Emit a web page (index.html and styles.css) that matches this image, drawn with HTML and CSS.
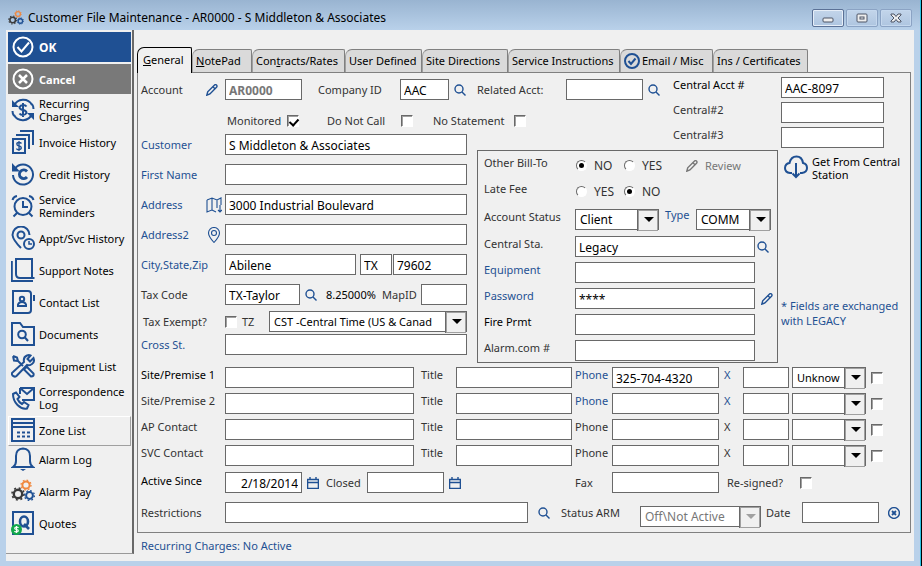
FILE: index.html
```html
<!DOCTYPE html>
<html lang="en">
<head>
  <meta charset="UTF-8" />
  <meta name="viewport" content="width=device-width, initial-scale=1.0"/>
  <title>Customer File Maintenance</title>
  <link rel="stylesheet" href="styles.css">
</head>
<body>
  <svg class="sprite" aria-hidden="true">
    <symbol id="search" viewBox="0 0 12 12"><circle cx="5" cy="5" r="4"/><path d="M8 8l3.500 3.500"/></symbol>
    <symbol id="pencil" viewBox="0 0 12 12"><path d="M.8 11.200l.9-3.400L8.300 1.200q1.200-1.100 2.200-.1t0 2.200L3.900 9.900z"/><path d="M7 2.700l2.200 2.200"/></symbol>
    <symbol id="calendar" viewBox="0 0 12 12"><path d="M.6 2.500h10.800v9H.6zM.6 5.500h10.800M3 0v3M9 0v3"/></symbol>
    <symbol id="gears" viewBox="0 0 24 24">
      <g stroke="#f0883e"><circle cx="15" cy="6" r="3.600"/><circle cx="15" cy="6" r="5" stroke-width="1.300" stroke-dasharray="1.700 2.227"/></g>
      <g stroke="#3a3a3a"><circle cx="7" cy="15" r="4.200" stroke-width="2.400"/><circle cx="7" cy="15" r="6" stroke-width="1.600" stroke-dasharray="2 2.712"/></g>
      <g stroke="#1f5093"><circle cx="18.500" cy="16.500" r="3.400"/><circle cx="18.500" cy="16.500" r="4.900" stroke-width="1.300" stroke-dasharray="1.700 2.148"/></g>
    </symbol>
  </svg>

  <div class="window">
    <header class="titlebar">
      <svg class="title-icon"><use href="#gears"/></svg>
      <h1>Customer File Maintenance - AR0000 - S Middleton &amp; Associates</h1>
      <div class="win-btns">
        <button class="strong" aria-label="Minimize"><svg viewBox="0 0 20 16"><rect x="5" y="8" width="10" height="4" rx="1"/></svg></button>
        <button aria-label="Restore"><svg viewBox="0 0 20 16"><rect x="5" y="4" width="10" height="8" rx="1"/><rect x="8" y="7" width="4" height="2"/></svg></button>
        <button aria-label="Close"><svg viewBox="0 0 20 16"><path d="M5 4h3l2 2.500L12 4h3v1l-3 3 3 3v1h-3l-2-2.500L8 12H5v-1l3-3-3-3z"/></svg></button>
      </div>
    </header>

    <div class="client">
      <aside class="sidebar">
        <nav class="menu">
          <button class="menu-btn ok">
            <svg viewBox="0 0 24 24"><circle cx="12" cy="12" r="9.500"/><path d="M6.500 12l4 4.500 7.500-9"/></svg>
            <span>OK</span>
          </button>
          <button class="menu-btn cancel">
            <svg viewBox="0 0 24 24"><circle cx="12" cy="12" r="9.500"/><path d="M8 8l8 8M16 8l-8 8" stroke-width="2.500"/></svg>
            <span>Cancel</span>
          </button>
          <button class="menu-btn">
            <svg viewBox="0 0 24 24"><path d="M3 8a10 10 0 0118-1M21 16a10 10 0 01-18 1M1.500 13q0 3 1.500 5M22.500 11q0-3-1.500-5"/><path d="M1 2v7h7zM23 22v-7h-7z" fill="#1f5093" stroke="none"/><path d="M15.500 8.500q-1-1.500-3.500-1.500t-3.500 2.200q0 2 3.500 2.800t3.500 2.800q-1 2.200-3.500 2.200t-3.500-1.500M12 5v14"/></svg>
            <span>Recurring<br>Charges</span>
          </button>
          <button class="menu-btn">
            <svg viewBox="0 0 24 24"><path d="M2 9h12v14H2zM5 5h13v14M9 1h13v14"/><path d="M10.500 13.500q-.8-1-2.500-1-2.200 0-2.200 1.600T8 16t2.300 1.800T8 19.500t-2.500-1M8 11v10" stroke-width="1.300"/></svg>
            <span>Invoice History</span>
          </button>
          <button class="menu-btn">
            <svg viewBox="0 0 24 24"><path d="M4 6.500a10 10 0 11-2 6.500"/><path d="M1 1v8.500h8z" fill="#1f5093" stroke="none"/><path d="M16 9.500a4.300 4.300 0 100 5.500" stroke-width="2.800"/></svg>
            <span>Credit History</span>
          </button>
          <button class="menu-btn">
            <svg viewBox="0 0 24 24"><circle cx="12" cy="12.500" r="8.500"/><path d="M12 7v6h5M6 19l-3.500 3.500M18 19l3.500 3.500M1.500 6Q2.500 2.500 6 2M22.500 6Q21.500 2.500 18 2"/></svg>
            <span>Service<br>Reminders</span>
          </button>
          <button class="menu-btn">
            <svg viewBox="0 0 24 24"><path d="M10 22Q2 14 1.500 9a8.500 8.500 0 0117 0"/><circle cx="10" cy="9" r="3.500"/><circle cx="18" cy="18" r="5"/><path d="M18 15v3h3" stroke-width="1.500"/></svg>
            <span>Appt/Svc History</span>
          </button>
          <button class="menu-btn">
            <svg viewBox="0 0 24 24"><path d="M5 1h16v19H9q-4 0-4-4zM21 20h2.500M.8 3v20H22"/></svg>
            <span>Support Notes</span>
          </button>
          <button class="menu-btn">
            <svg viewBox="0 0 24 24"><path d="M2 1h15q3 0 3 3v16q0 3-3 3H2zM23 5v6"/><circle cx="11" cy="9" r="2.200"/><path d="M7 16v-1.500q1-2.500 4-2.500t4 2.500V16z"/></svg>
            <span>Contact List</span>
          </button>
          <button class="menu-btn">
            <svg viewBox="0 0 24 24"><path d="M1 1h8l3 4h11v18H1z"/><circle cx="11" cy="12.500" r="3.800"/><path d="M13.500 15l3.500 4"/></svg>
            <span>Documents</span>
          </button>
          <button class="menu-btn">
            <svg viewBox="0 0 24 24"><path d="M2 2l4 1.500L7 7l5 5M2 2l1 4.500L7 7M14 14l2-1 6.500 6.500q.8 3-2.500 3L13.500 16zM2 18L13 8q-1-5 3-6.500 2-.8 3.500 0L16.500 5l2.500 2.500L22.500 4q1.500 4-1.500 6t-5 1L5.500 22q-2 1.500-4-.5 -1.500-2 .5-3.500z"/></svg>
            <span>Equipment List</span>
          </button>
          <button class="menu-btn">
            <svg viewBox="0 0 24 24"><path d="M9 2h14v12H11M9 2l7 6 7-6M9 2v6"/><path d="M2 8l3-1.500L8.500 11l-2 2q1.500 3.500 4.500 5l2-2 4.500 3-1.500 3.500q-5 1-9.500-3.500T2 8z"/></svg>
            <span>Correspondence<br>Log</span>
          </button>
          <button class="menu-btn raised">
            <svg viewBox="0 0 24 24"><path d="M1 1h22v22H1zM1 5h22M1 9h22"/><path d="M6 14.500h13M6 18.500h13" stroke-dasharray="3 2"/></svg>
            <span>Zone List</span>
          </button>
        </nav>
        <nav class="menu menu-foot">
          <button class="menu-btn">
            <svg viewBox="0 0 24 24"><path d="M2 20q3-2 3-6V9q0-7 7-7.500Q19 2 19 9v5q0 4 3 6z"/><path d="M9 22h6l-3 2z" fill="#1f5093" stroke="none"/></svg>
            <span>Alarm Log</span>
          </button>
          <button class="menu-btn">
            <svg><use href="#gears"/></svg>
            <span>Alarm Pay</span>
          </button>
          <button class="menu-btn">
            <svg viewBox="0 0 24 24"><path d="M2 1h20v22H2z"/><ellipse cx="13" cy="10.500" rx="4" ry="5" stroke-width="2.600"/><path d="M13 13l5 5" stroke-width="2.600"/><circle cx="5.500" cy="18.500" r="5.500" fill="#12a84a" stroke="none"/><path d="M7.500 16.800q-.6-.8-2-.8-1.800 0-1.800 1.200t1.800 1.300 1.800 1.300-1.800 1.200-2-.8M5.500 15v7" stroke="#fff" stroke-width="1.200"/></svg>
            <span>Quotes</span>
          </button>
        </nav>
      </aside>

      <main class="main-content">
        <div class="tabs" role="tablist">
          <button class="tab active" role="tab"><span><u>G</u>eneral</span></button>
          <button class="tab t-note" role="tab"><span><u>N</u>otePad</span></button>
          <button class="tab t-rates" role="tab"><span>Con<u>t</u>racts/Rates</span></button>
          <button class="tab t-user" role="tab">User Defined</button>
          <button class="tab t-site" role="tab">Site Directions</button>
          <button class="tab t-service" role="tab">Service Instructions</button>
          <button class="tab t-email" role="tab"><svg viewBox="0 0 16 16"><circle cx="8" cy="8" r="7"/><path d="M4.500 8l2.500 3 4.500-5.500"/></svg>Email / Misc</button>
          <button class="tab t-ins" role="tab">Ins / Certificates</button>
        </div>

        <form class="panel">
          <div class="top-grid">
            <section class="account">
              <div class="row">
                <label class="lbl" for="account">Account</label>
                <button type="button" class="icon-btn edit-acct" aria-label="Edit account"><svg><use href="#pencil"/></svg></button>
                <input type="text" id="account" class="w-77 acct-no" value="AR0000">
                <label class="company-lbl" for="company">Company ID</label>
                <input type="text" id="company" class="w-49" value="AAC">
                <button type="button" class="icon-btn" aria-label="Find company"><svg><use href="#search"/></svg></button>
                <label class="related-lbl" for="related">Related Acct:</label>
                <input type="text" id="related" class="w-77">
                <button type="button" class="icon-btn" aria-label="Find related account"><svg><use href="#search"/></svg></button>
              </div>
              <div class="checks">
                <label class="c-mon">Monitored <input type="checkbox" checked></label>
                <label class="c-call">Do Not Call <input type="checkbox"></label>
                <label class="c-stmt">No Statement <input type="checkbox"></label>
              </div>
            </section>

            <section class="central">
              <label class="dark" for="c1">Central Acct #</label><input type="text" id="c1" value="AAC-8097">
              <label for="c2">Central#2</label><input type="text" id="c2">
              <label for="c3">Central#3</label><input type="text" id="c3">
            </section>

            <section class="customer">
              <div class="row"><label class="lbl blue" for="customer">Customer</label><input type="text" id="customer" class="grow" value="S Middleton &amp; Associates"></div>
              <div class="row"><label class="lbl blue" for="first">First Name</label><input type="text" id="first" class="grow"></div>
              <div class="row">
                <label class="lbl blue" for="address">Address</label>
                <button type="button" class="icon-btn map" aria-label="Open map"><svg viewBox="0 0 16 16"><path d="M1 3l5-2 5 2 4-2v7M1 3v12l5-2V1M6 13l4 2M11 3v8M14 8v7M12 13l2 2 2-2"/></svg></button>
                <input type="text" id="address" class="grow" value="3000 Industrial Boulevard">
              </div>
              <div class="row">
                <label class="lbl blue" for="address2">Address2</label>
                <button type="button" class="icon-btn map" aria-label="Locate"><svg viewBox="0 0 16 16"><path d="M8 15.500Q2.500 9.500 2.500 6a5.500 5.500 0 0111 0Q13.500 9.500 8 15.500z"/><circle cx="8" cy="6" r="2.500"/></svg></button>
                <input type="text" id="address2" class="grow">
              </div>
              <div class="row">
                <label class="lbl blue" for="city">City,State,Zip</label>
                <input type="text" id="city" class="grow" value="Abilene">
                <input type="text" class="w-32 state" aria-label="State" value="TX">
                <input type="text" class="w-74" aria-label="Zip" value="79602">
              </div>
              <div class="row">
                <label class="lbl" for="tax">Tax Code</label>
                <input type="text" id="tax" class="w-75" value="TX-Taylor">
                <button type="button" class="icon-btn" aria-label="Find tax code"><svg><use href="#search"/></svg></button>
                <span class="dark rate">8.25000%</span>
                <label class="mapid-lbl" for="mapid">MapID</label>
                <input type="text" id="mapid" class="grow">
              </div>
              <div class="row">
                <label class="lbl exempt" for="exempt">Tax Exempt?</label>
                <input type="checkbox" id="exempt">
                <label class="tz-lbl" for="tz">TZ</label>
                <span class="combo small grow"><select id="tz"><option>CST -Central Time (US &amp; Canad</option></select></span>
              </div>
              <div class="row"><label class="lbl blue" for="cross">Cross St.</label><input type="text" id="cross" class="grow"></div>
            </section>

            <section class="billing">
              <div class="row">
                <span class="bl">Other Bill-To</span>
                <label class="opt"><input type="radio" name="bill" checked>NO</label>
                <label class="opt"><input type="radio" name="bill">YES</label>
                <button type="button" class="review"><svg><use href="#pencil"/></svg>Review</button>
              </div>
              <div class="row">
                <span class="bl">Late Fee</span>
                <label class="opt"><input type="radio" name="late">YES</label>
                <label class="opt"><input type="radio" name="late" checked>NO</label>
              </div>
              <div class="row status">
                <label class="bl" for="status">Account Status</label>
                <span class="combo w-84"><select id="status"><option>Client</option></select></span>
                <label class="type-lbl blue" for="type">Type</label>
                <span class="combo w-75"><select id="type"><option>COMM</option></select></span>
              </div>
              <div class="row">
                <label class="bl" for="station">Central Sta.</label><input type="text" id="station" class="grow" value="Legacy">
                <button type="button" class="icon-btn side" aria-label="Find central station"><svg><use href="#search"/></svg></button>
              </div>
              <div class="row"><label class="bl blue" for="equip">Equipment</label><input type="text" id="equip" class="grow"><span class="side"></span></div>
              <div class="row">
                <label class="bl blue" for="pass">Password</label><input type="text" id="pass" class="grow" value="****">
                <button type="button" class="icon-btn side end" aria-label="Edit password"><svg><use href="#pencil"/></svg></button>
              </div>
              <div class="row"><label class="bl dark" for="fire">Fire Prmt</label><input type="text" id="fire" class="grow"><span class="side"></span></div>
              <div class="row"><label class="bl" for="alarm">Alarm.com #</label><input type="text" id="alarm" class="grow"><span class="side"></span></div>
            </section>

            <section class="station">
              <button type="button" class="get-btn">
                <svg viewBox="0 0 24 24"><path d="M8 18H6q-5-.5-5-5 .3-4.500 4.500-5Q7 1.500 12.500 1.500T19 8q4 .8 4 5t-5 5h-2M12 8v13M8.500 18.500L12 22l3.500-3.500"/></svg>
                <span>Get From Central Station</span>
              </button>
              <p class="blue">* Fields are exchanged with LEGACY</p>
            </section>
          </div>

          <div class="contacts">
            <label class="dark" for="s1">Site/Premise 1</label><input type="text" id="s1">
            <label class="ttl" for="s1t">Title</label><input type="text" id="s1t">
            <label class="blue" for="s1p">Phone</label><input type="text" id="s1p" value="325-704-4320">
            <label class="blue ext" for="s1x">X</label><input type="text" id="s1x">
            <span class="combo small"><select aria-label="Phone type 1"><option>Unknow</option></select></span><input type="checkbox" aria-label="Select 1">

            <label for="s2">Site/Premise 2</label><input type="text" id="s2">
            <label class="ttl" for="s2t">Title</label><input type="text" id="s2t">
            <label class="blue" for="s2p">Phone</label><input type="text" id="s2p">
            <label class="blue ext" for="s2x">X</label><input type="text" id="s2x">
            <span class="combo small"><select aria-label="Phone type 2"><option></option></select></span><input type="checkbox" aria-label="Select 2">

            <label for="ap">AP Contact</label><input type="text" id="ap">
            <label class="ttl" for="apt">Title</label><input type="text" id="apt">
            <label for="app">Phone</label><input type="text" id="app">
            <label class="ext" for="apx">X</label><input type="text" id="apx">
            <span class="combo small"><select aria-label="Phone type 3"><option></option></select></span><input type="checkbox" aria-label="Select 3">

            <label for="svc">SVC Contact</label><input type="text" id="svc">
            <label class="ttl" for="svct">Title</label><input type="text" id="svct">
            <label for="svcp">Phone</label><input type="text" id="svcp">
            <label class="ext" for="svcx">X</label><input type="text" id="svcx">
            <span class="combo small"><select aria-label="Phone type 4"><option></option></select></span><input type="checkbox" aria-label="Select 4">
          </div>

          <div class="row dates">
            <label class="lbl dark" for="since">Active Since</label>
            <input type="text" id="since" class="w-77 right" value="2/18/2014">
            <button type="button" class="icon-btn" aria-label="Pick start date"><svg><use href="#calendar"/></svg></button>
            <label class="closed-lbl" for="closed">Closed</label>
            <input type="text" id="closed" class="w-77">
            <button type="button" class="icon-btn" aria-label="Pick closed date"><svg><use href="#calendar"/></svg></button>
            <label class="fax-lbl" for="fax">Fax</label>
            <input type="text" id="fax" class="w-107">
            <label class="signed">Re-signed? <input type="checkbox"></label>
          </div>

          <div class="row last">
            <label class="lbl" for="restrict">Restrictions</label>
            <input type="text" id="restrict" class="grow">
            <button type="button" class="icon-btn wide" aria-label="Find restriction"><svg><use href="#search"/></svg></button>
            <label class="arm-lbl" for="arm">Status ARM</label>
            <span class="combo w-121 off"><select id="arm" disabled><option>Off\Not Active</option></select></span>
            <label class="date-lbl" for="date">Date</label>
            <input type="text" id="date" class="w-77">
            <button type="button" class="icon-btn clear" aria-label="Clear date"><svg viewBox="0 0 12 12"><circle cx="6" cy="6" r="5.400"/><path d="M4 4l4 4M8 4l-4 4" stroke-width="1.800"/></svg></button>
          </div>
        </form>

        <p class="status-line blue">Recurring Charges: No Active</p>
      </main>
    </div>
  </div>
</body>
</html>
```
FILE: styles.css
```css
* { margin: 0; padding: 0; box-sizing: border-box; }
body {
  font-family: "Noto Sans", "Open Sans", sans-serif;
  font-size: 11px;
  line-height: 16px;
  color: #333;
  background: #b9d1ea;
}
button, input, select { font: inherit; color: inherit; border-radius: 0; }
button { background: none; border: none; }
svg { fill: none; stroke: #1f5093; stroke-width: 2; flex-shrink: 0; }
.sprite { position: absolute; width: 0; height: 0; }
.blue { color: #1f5093; }
.dark { color: #000; }

.window {
  min-height: 100vh;
  display: flex;
  flex-direction: column;
  padding: 0 7px 5px 6px;
  background: linear-gradient(#99b4d1, #b9d1ea 30px);
  border-right: 1px solid #000;
  box-shadow: inset -1px 0 0 #2cc4e4;
}
.titlebar {
  height: 30px;
  display: flex;
  align-items: center;
  gap: 4px;
  padding: 6px 2px 0 2px;
  color: #000;
}
.title-icon { width: 16px; height: 16px; }
.titlebar h1 { flex: 1; font-size: 12px; font-weight: normal; }
.win-btns { display: flex; gap: 2px; }
.win-btns button {
  width: 32px;
  height: 18px;
  border: 1px solid #8ba3c4;
  border-radius: 2px;
  background: linear-gradient(#c3d5ea, #aec5e0);
  box-shadow: inset 0 0 0 1px #c5d8ee;
}
.win-btns .strong { border-color: #5b7196; box-shadow: inset 0 0 0 1px #e6eef8; }
.win-btns svg { display: block; width: 20px; height: 16px; margin: 0 auto; fill: #eee; stroke: #4d5566; stroke-width: 1; }

.client { flex: 1; display: flex; background: #f0f0f0; }
.sidebar {
  width: 128px;
  margin-bottom: 7px;
  padding: 2px 1px 0 2px;
  border-right: 2px solid #696969;
  border-bottom: 1px solid #999;
}
.menu { display: flex; flex-direction: column; gap: 2px; }
.menu-btn {
  height: 30px;
  display: flex;
  align-items: center;
  gap: 4px;
  padding: 0 0 2px 3px;
  line-height: 13px;
  text-align: left;
  color: #000;
  white-space: nowrap;
}
.menu-btn svg { width: 24px; height: 24px; }
.ok, .cancel { padding-bottom: 0; font-size: 12px; color: #fff; font-weight: bold; }
.ok svg, .cancel svg { stroke: #fff; }
.ok { background: #1f5093; }
.cancel { font-size: 11px; background: #797979; }
.raised { border: 1px solid; border-color: #fff #a0a0a0 #a0a0a0 #fff; padding-left: 2px; }
.menu-foot { gap: 4px; }
.menu-foot .menu-btn { height: 28px; }

.main-content { flex: 1; min-width: 0; padding: 17px 3px 0; }
.tabs { display: flex; align-items: flex-end; height: 25px; }
.tab {
  width: 55px;
  height: 23px;
  display: flex;
  align-items: center;
  gap: 2px;
  padding: 0 0 0 3px;
  white-space: nowrap;
  color: #000;
  background: #dadada;
  border: 1px solid #808080;
  border-left-color: #a0a0a0;
  border-bottom: none;
  border-radius: 7px 2px 0 0;
}
.tab svg { width: 16px; height: 16px; }
.tab.active { height: 26px; margin-bottom: -1px; padding: 0 0 2px 5px; background: #f0f0f0; border-color: #000; }
.t-note { width: 60px; }
.t-rates { width: 93px; }
.t-user { width: 77px; }
.t-site { width: 86px; }
.t-service { width: 112px; }
.t-email { width: 93px; }
.t-ins { width: 95px; }

.panel { border: 1px solid #808080; padding: 0 26px 9px 3px; }
.row { display: flex; align-items: center; min-height: 21px; }
.lbl { width: 84px; white-space: nowrap; flex-shrink: 0; }
.grow { flex: 1; min-width: 0; }
input[type="text"] {
  height: 21px;
  min-width: 0;
  padding: 1px 3px 0;
  border: 1px solid #696969;
  background: #fff;
  color: #000;
  font-size: 12px;
}
.w-32 { width: 32px; }
.w-49 { width: 49px; }
.w-74 { width: 74px; }
.w-75 { width: 75px; }
.w-77 { width: 77px; }
.w-84 { width: 84px; }
.w-107 { width: 107px; }
.w-121 { width: 121px; }
input.right { text-align: right; }

.combo { position: relative; display: block; height: 21px; font-size: 12px; }
.combo.small { font-size: 11px; }
.combo select {
  appearance: none;
  display: block;
  width: 100%;
  height: 21px;
  padding: 0 19px 0 4px;
  border: 1px solid #696969;
  background: #fff;
  color: #000;
  overflow: hidden;
}
.combo::before {
  content: "";
  position: absolute;
  top: 1px;
  right: 1px;
  width: 18px;
  height: 19px;
  border: 1px solid #a0a0a0;
  box-shadow: -1px 0 0 #696969;
  background: #f0f0f0;
  pointer-events: none;
}
.combo::after {
  content: "";
  position: absolute;
  top: 8px;
  right: 5px;
  border: 5px solid transparent;
  border-top-color: #000;
  border-bottom: none;
  pointer-events: none;
}
.combo.off select { color: #777; opacity: 1; }
.off::after { border-top-color: #a0a0a0; }

input[type="checkbox"], input[type="radio"] {
  appearance: none;
  position: relative;
  width: 12px;
  height: 12px;
  flex-shrink: 0;
  background: #fff;
  border: 1px solid;
  border-color: #696969 #fff #fff #696969;
  box-shadow: inset 1px 1px 0 #a0a0a0;
}
input[type="radio"] { width: 11px; height: 11px; border-radius: 50%; box-shadow: none; }
input[type="checkbox"]:checked::after {
  content: "";
  position: absolute;
  left: 3px;
  top: 1px;
  width: 4px;
  height: 7px;
  border: solid #000;
  border-width: 0 2px 2px 0;
  transform: rotate(42deg);
}
input[type="radio"]:checked::after {
  content: "";
  position: absolute;
  inset: 2px;
  border-radius: 50%;
  background: #000;
}
.icon-btn { width: 22px; height: 16px; margin-right: 2px; display: flex; align-items: center; justify-content: center; flex-shrink: 0; }
.icon-btn svg { width: 12px; height: 12px; stroke-width: 1.4; }
.icon-btn.wide { width: 28px; margin-right: 0; padding-left: 4px; }

.top-grid {
  display: grid;
  grid-template-columns: 336px 196fr 105px 106fr;
  grid-template-rows: 61px 16px auto;
}
.account { grid-area: 1 / 1 / 2 / 3; padding-top: 6px; }
.account .lbl { width: 59px; }
.icon-btn.edit-acct { width: 23px; }
.acct-no[type="text"] { font-weight: bold; color: #777; }
.company-lbl { width: 98px; padding-left: 16px; }
.related-lbl { width: 93px; padding-left: 4px; }
.account label { white-space: nowrap; }
.checks { display: flex; margin-top: 13px; padding-left: 86px; }
.checks label { display: flex; align-items: center; justify-content: space-between; }
.c-mon { width: 72px; }
.c-call { width: 86px; margin-left: 28px; }
.c-stmt { width: 93px; margin-left: 20px; }

.central {
  grid-area: 1 / 3 / 3 / 5;
  display: grid;
  grid-template-columns: 108px 1fr;
  row-gap: 4px;
  align-content: start;
  padding-top: 4px;
}
.customer { grid-area: 2 / 1 / 4 / 2; padding-right: 10px; }
.customer .row { margin-bottom: 9px; }
.customer .row:nth-child(n+6) { margin-bottom: 6px; }
.customer .row:nth-child(n+7) { margin-bottom: 2px; }
.icon-btn.map { width: 18px; margin: 0 2px 0 -20px; }
.map svg { width: 16px; height: 16px; stroke-width: 1.1; }
.state { margin: 0 1px 0 4px; }
.rate { width: 56px; padding-left: 2px; }
.mapid-lbl { width: 41px; padding-left: 2px; }
.exempt { padding-left: 2px; }
.tz-lbl { width: 32px; padding-left: 5px; }

.billing {
  grid-area: 3 / 2 / 4 / 4;
  border: 1px solid #696969;
  padding: 4px 6px 1px;
}
.billing .row { margin-bottom: 5px; }
.billing .row.status { margin: 7px 0 6px; }
.billing .row:last-child { margin-bottom: 0; }
.bl { width: 91px; padding-bottom: 5px; flex-shrink: 0; white-space: nowrap; }
.opt { width: 48px; display: flex; align-items: center; gap: 7px; padding-left: 1px; font-size: 12px; }
.review { display: flex; align-items: center; gap: 7px; padding-left: 15px; color: #777; }
.review svg { width: 12px; height: 12px; stroke: #777; stroke-width: 1.4; }
.type-lbl { width: 37px; padding: 0 0 9px 6px; line-height: 12px; }
.billing .side { width: 16px; margin: 0; }
.side.end svg { margin-left: 8px; }

.station { grid-area: 3 / 4 / 4 / 5; margin-right: -26px; padding: 5px 0 0 6px; }
.get-btn { display: flex; gap: 4px; text-align: left; line-height: 13px; color: #000; }
.get-btn svg { width: 24px; height: 24px; }
.station p { margin: 117px 0 0 -3px; line-height: 15px; }

.contacts {
  display: grid;
  grid-template-columns: 81px 189fr 36px 116fr 34px 107fr 18px 46px 74px 15px;
  gap: 5px 3px;
  align-items: center;
  padding-top: 4px;
}
.contacts label { padding-bottom: 5px; white-space: nowrap; }
.ttl { padding-left: 4px; }
.ext { padding-left: 2px; }
.contacts input[type="checkbox"] { justify-self: center; }

.dates { margin-top: 6px; }
.dates .dark { padding-bottom: 4px; }
.closed-lbl { width: 41px; }
.fax-lbl { width: 37px; margin-left: auto; }
.signed { width: 165px; display: flex; align-items: center; gap: 17px; padding-left: 8px; }
.last { height: 21px; margin-top: 9px; }
.last .combo { margin-top: 8px; }
.arm-lbl { width: 84px; padding-left: 5px; white-space: nowrap; }
.date-lbl { width: 41px; padding-left: 5px; }
.icon-btn.clear { width: 28px; margin-right: -23px; padding-left: 2px; }
.status-line { padding: 5px 4px 0; }
```
